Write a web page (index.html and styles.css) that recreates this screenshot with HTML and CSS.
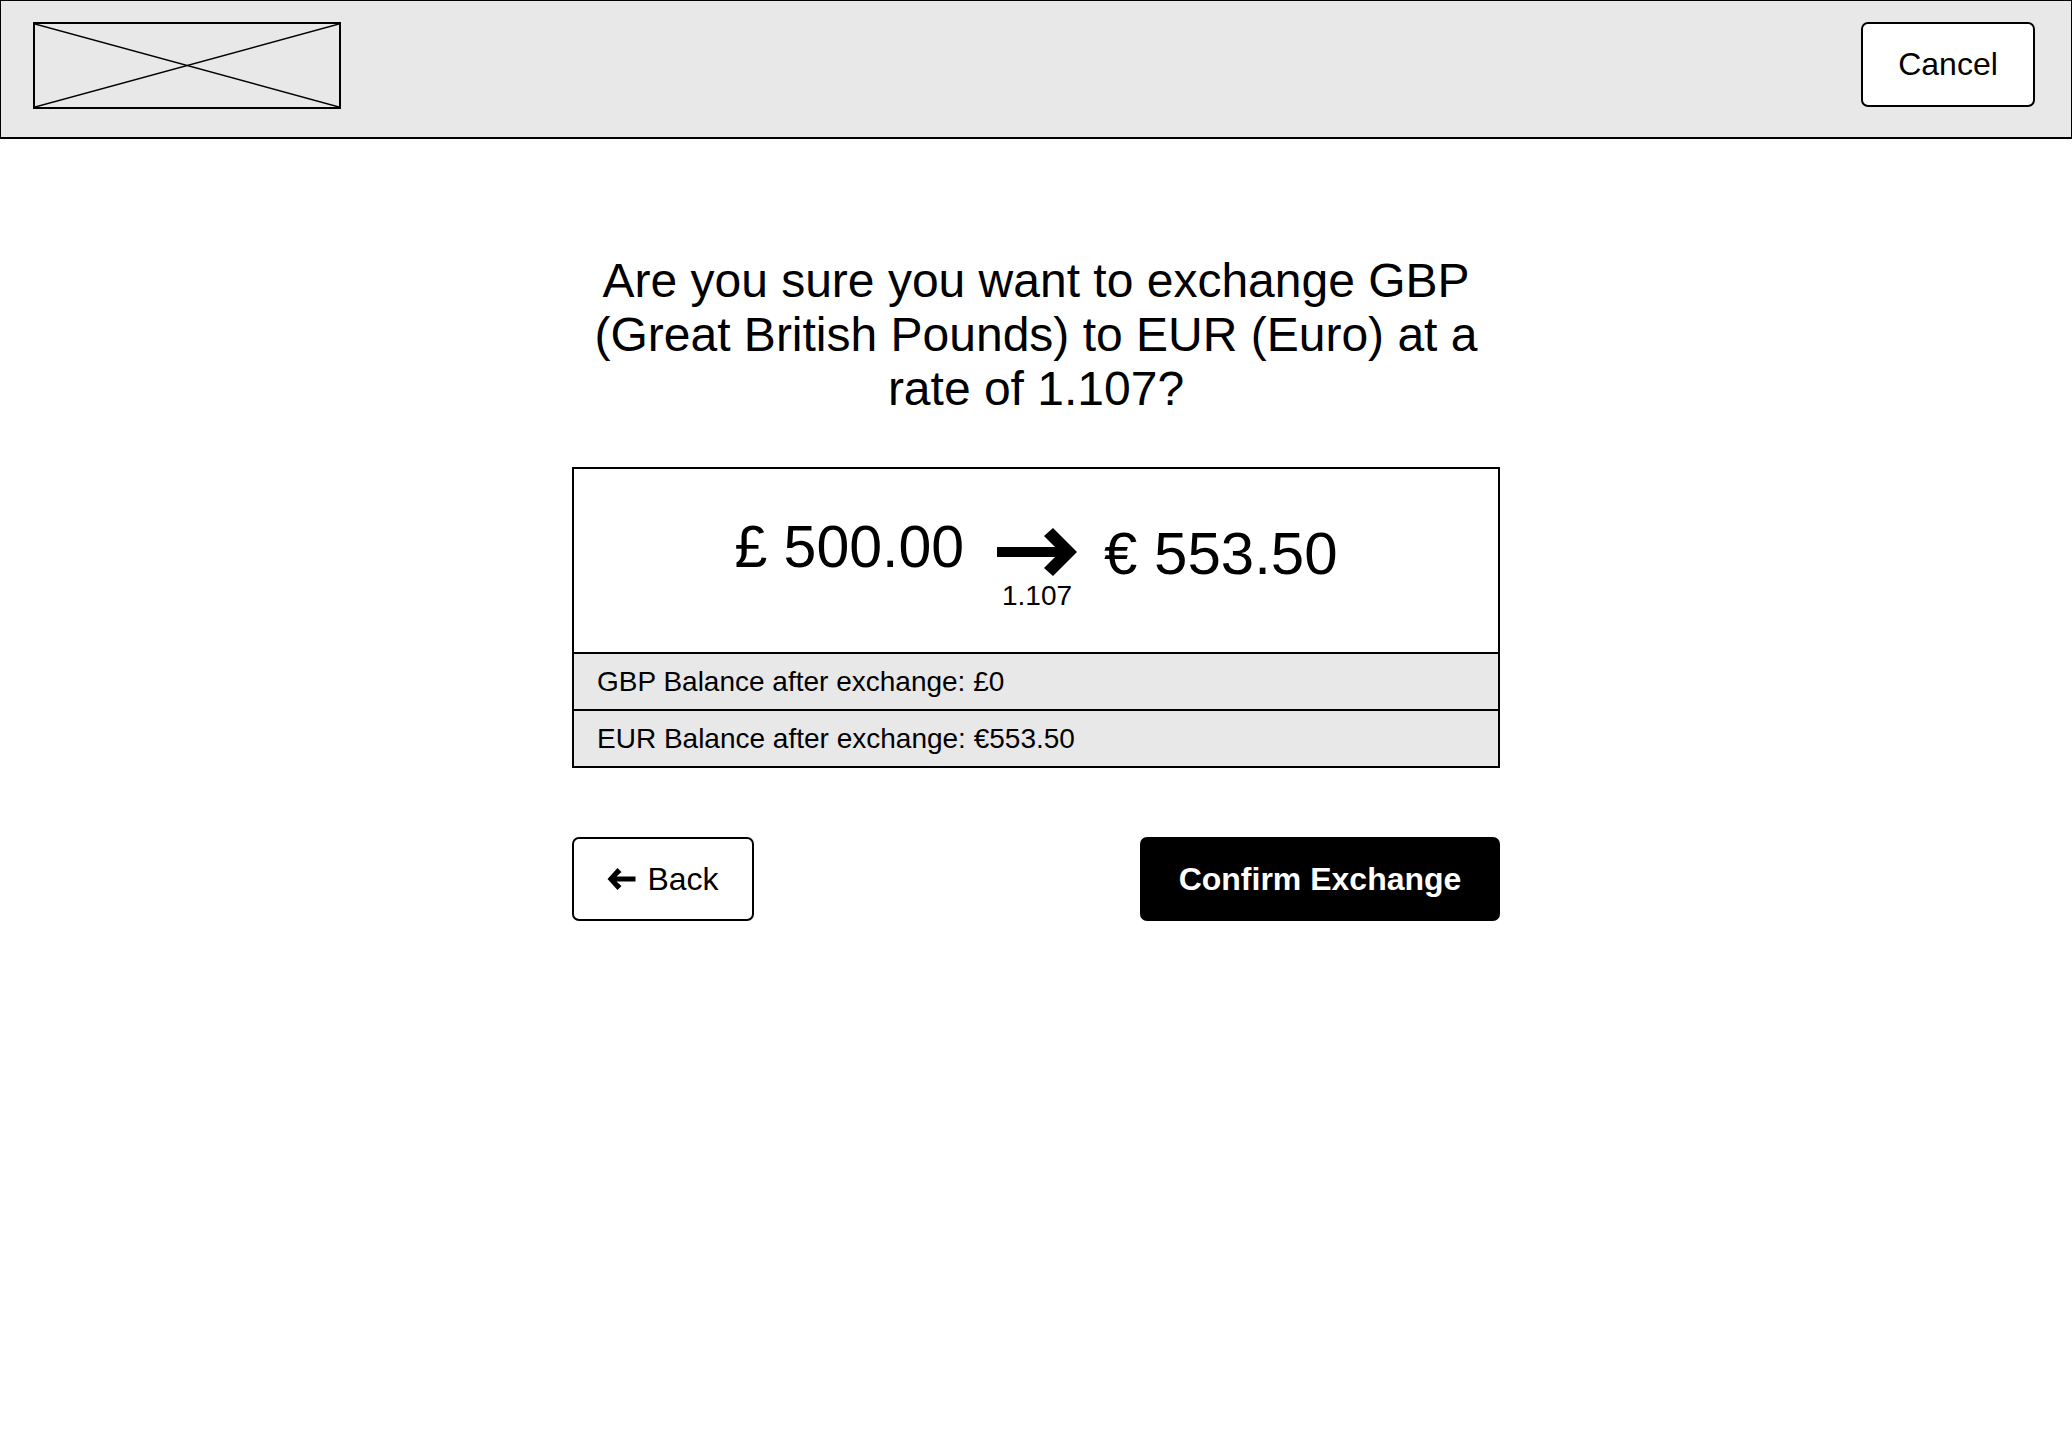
FILE: index.html
```html
<!DOCTYPE html>
<html lang="en">
<head>
<meta charset="utf-8">
<title>Confirm Exchange</title>
<link rel="stylesheet" href="styles.css">
</head>
<body>
<header class="topbar">
  <div class="logo">
    <svg class="logo-x" viewBox="0 0 100 100" preserveAspectRatio="none">
      <line x1="0" y1="0" x2="100" y2="100" vector-effect="non-scaling-stroke"/>
      <line x1="0" y1="100" x2="100" y2="0" vector-effect="non-scaling-stroke"/>
    </svg>
  </div>
  <button class="btn btn-cancel">Cancel</button>
</header>

<main class="content">
  <h1 class="question">Are you sure you want to exchange GBP (Great British Pounds) to EUR (Euro) at a rate of 1.107?</h1>

  <section class="summary">
    <div class="conversion">
      <div class="amount amount-from">£ 500.00</div>
      <div class="rate">
        <svg class="rate-arrow" viewBox="0 0 80 48">
          <rect x="0" y="19" width="66" height="10"/>
          <polygon points="47,8 56,0 80,24 56,48 47,40 63,24"/>
        </svg>
        <div class="rate-value">1.107</div>
      </div>
      <div class="amount amount-to">€ 553.50</div>
    </div>
    <div class="balance">GBP Balance after exchange: £0</div>
    <div class="balance">EUR Balance after exchange: €553.50</div>
  </section>

  <div class="actions">
    <button class="btn btn-back">
      <svg class="back-icon" viewBox="0 0 28 22">
        <polygon points="0,11 10,0 14,4 9,8.5 28,8.5 28,13.5 9,13.5 14,18 10,22"/>
      </svg>
      <span>Back</span>
    </button>
    <button class="btn btn-confirm">Confirm Exchange</button>
  </div>
</main>
</body>
</html>
```

FILE: styles.css
```css
html, body {
  margin: 0;
  padding: 0;
  background: #ffffff;
}

body {
  font-family: "Liberation Sans", Arial, sans-serif;
  color: #000;
}

.topbar {
  box-sizing: border-box;
  height: 139px;
  background: #e8e8e8;
  border-style: solid;
  border-color: #000;
  border-width: 1px 1px 2px 1px;
  display: flex;
  align-items: flex-start;
  justify-content: space-between;
  padding: 21px 36px 0 32px;
}

.logo {
  box-sizing: border-box;
  width: 308px;
  height: 87px;
  border: 2px solid #000;
}

.logo-x {
  display: block;
  width: 100%;
  height: 100%;
}

.logo-x line {
  stroke: #000;
  stroke-width: 1.5px;
}

.btn {
  font-family: "Liberation Sans", Arial, sans-serif;
  font-size: 32px;
  box-sizing: border-box;
  height: 85px;
  border-radius: 7px;
  cursor: pointer;
  padding: 0;
}

.btn-cancel {
  width: 174px;
  margin-top: 0;
  background: #fff;
  border: 2px solid #000;
  color: #000;
}

.content {
  width: 928px;
  margin: 0 auto;
  padding-top: 114px;
}

.question {
  margin: 0;
  font-weight: normal;
  font-size: 48px;
  line-height: 54px;
  text-align: center;
  padding: 1px 8px 0;
}

.summary {
  margin-top: 51px;
  border: 2px solid #000;
}

.conversion {
  box-sizing: border-box;
  height: 185px;
  border-bottom: 2px solid #000;
  display: flex;
  justify-content: center;
  align-items: flex-start;
  padding-top: 49px;
}

.amount {
  line-height: 1;
  white-space: nowrap;
}

.amount-from {
  font-size: 59px;
}

.amount-to {
  font-size: 60px;
  margin-top: 6px;
}

.rate {
  margin: 10px 27px 0 33px;
  display: flex;
  flex-direction: column;
  align-items: center;
}

.rate-arrow {
  display: block;
  width: 80px;
  height: 48px;
  fill: #000;
}

.rate-value {
  font-size: 28px;
  line-height: 28px;
  margin-top: 6px;
}

.balance {
  box-sizing: border-box;
  height: 55px;
  background: #e8e8e8;
  font-size: 28px;
  display: flex;
  align-items: center;
  padding-left: 23px;
}

.balance + .balance {
  border-top: 2px solid #000;
  height: 57px;
}

.actions {
  margin-top: 69px;
  display: flex;
  justify-content: space-between;
}

.btn-back {
  width: 182px;
  height: 84px;
  background: #fff;
  border: 2px solid #000;
  color: #000;
  display: flex;
  align-items: center;
  justify-content: center;
  gap: 11px;
}

.back-icon {
  width: 29px;
  height: 22px;
  fill: #000;
  display: block;
}

.btn-confirm {
  width: 360px;
  height: 84px;
  background: #000;
  color: #fff;
  border: none;
  font-weight: bold;
}
```
